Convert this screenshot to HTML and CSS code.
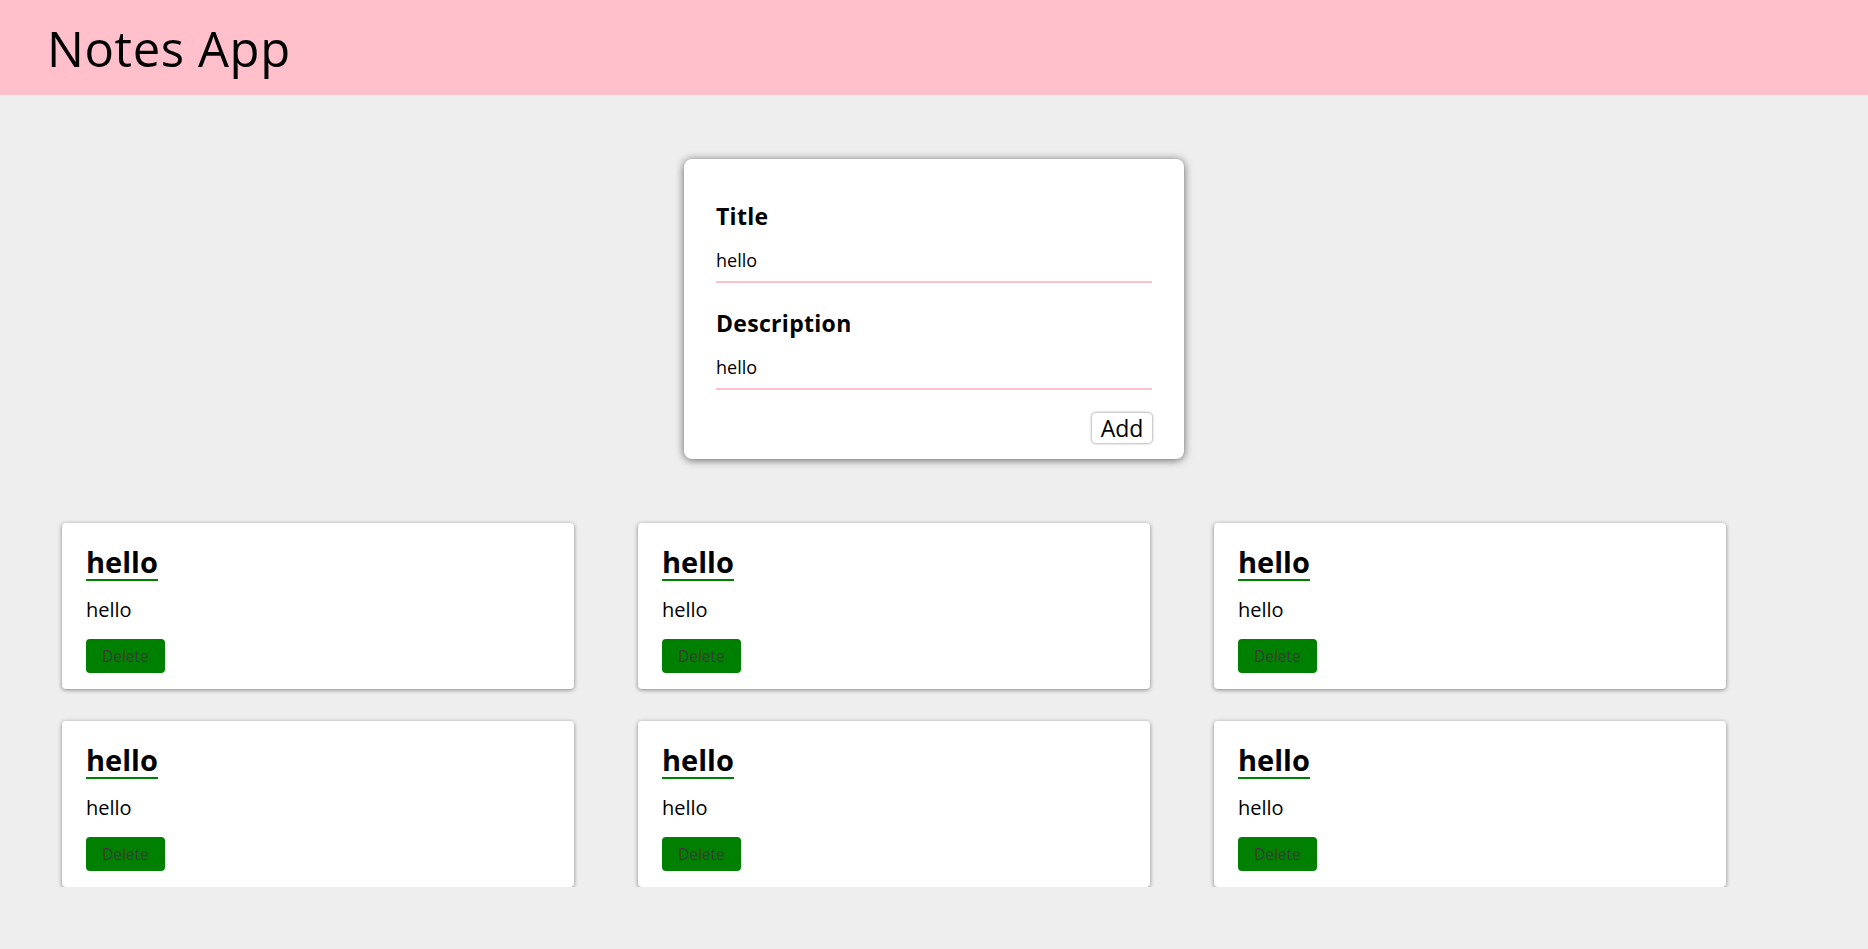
FILE: index.html
```html
<!DOCTYPE html>
<html lang="en">
<head>
<meta charset="utf-8">
<title>Notes App</title>
<link rel="stylesheet" href="styles.css">
</head>
<body>
<header class="app-header">
  <h1 class="app-title">Notes App</h1>
</header>
<main class="main">
  <div class="form-wrap">
    <form class="note-form">
      <div class="field">
        <label class="field-label" for="title">Title</label>
        <input class="field-input" id="title" type="text" value="hello">
      </div>
      <div class="field">
        <label class="field-label" for="desc">Description</label>
        <input class="field-input" id="desc" type="text" value="hello">
      </div>
      <div class="form-actions">
        <button class="add-btn" type="button">Add</button>
      </div>
    </form>
  </div>
  <section class="notes">
    <article class="note"><h2 class="note-title">hello</h2><p class="note-desc">hello</p><button class="delete-btn" type="button">Delete</button></article>
    <article class="note"><h2 class="note-title">hello</h2><p class="note-desc">hello</p><button class="delete-btn" type="button">Delete</button></article>
    <article class="note"><h2 class="note-title">hello</h2><p class="note-desc">hello</p><button class="delete-btn" type="button">Delete</button></article>
    <article class="note"><h2 class="note-title">hello</h2><p class="note-desc">hello</p><button class="delete-btn" type="button">Delete</button></article>
    <article class="note"><h2 class="note-title">hello</h2><p class="note-desc">hello</p><button class="delete-btn" type="button">Delete</button></article>
    <article class="note"><h2 class="note-title">hello</h2><p class="note-desc">hello</p><button class="delete-btn" type="button">Delete</button></article>
  </section>
</main>
</body>
</html>
```

FILE: styles.css
```css
* { box-sizing: border-box; }

html, body {
  margin: 0;
  padding: 0;
  background: #eeeeee;
  font-family: "Open Sans", "Noto Sans", sans-serif;
  color: #000;
}

.app-header {
  background: #ffc0cb;
  height: 95px;
  padding: 16px 0 0 47px;
}

.app-title {
  margin: 0;
  font-size: 49px;
  line-height: 64px;
  font-weight: 400;
  letter-spacing: 0.6px;
}

.main {
  padding-top: 64px;
}

.form-wrap {
  display: flex;
  justify-content: center;
}

.note-form {
  width: 500px;
  background: #fff;
  border-radius: 8px;
  box-shadow: 0 1px 8px rgba(0, 0, 0, 0.6);
  padding: 41px 32px 16px;
}

.field + .field {
  margin-top: 24px;
}

.field-label {
  display: block;
  font-size: 23px;
  line-height: 32px;
  font-weight: 700;
  letter-spacing: 0.3px;
}

.field-input {
  display: block;
  width: 100%;
  margin-top: 8px;
  padding: 8px 0 9px;
  border: none;
  border-bottom: 2px solid #ffc0cb;
  outline: none;
  background: transparent;
  font-family: inherit;
  font-size: 18px;
  line-height: 24px;
  color: #000;
}

.form-actions {
  display: flex;
  justify-content: flex-end;
  margin-top: 23px;
}

.add-btn {
  width: 60px;
  height: 30px;
  padding: 0;
  border: none;
  border-radius: 4px;
  background: #fff;
  box-shadow: 0 0 3px rgba(0, 0, 0, 0.55);
  font-family: inherit;
  font-size: 23px;
  line-height: 30px;
  color: #000;
}

.notes {
  display: grid;
  grid-template-columns: repeat(3, 512px);
  column-gap: 64px;
  row-gap: 32px;
  padding: 64px 0 0 62px;
}

.note {
  background: #fff;
  border-radius: 4px;
  box-shadow: 0 1px 4px rgba(0, 0, 0, 0.45);
  padding: 23px 24px 16px;
  height: 166px;
}

.note-title {
  display: inline-block;
  margin: 0;
  font-size: 29px;
  line-height: 32px;
  font-weight: 700;
  padding-bottom: 1px;
  border-bottom: 2px solid #008000;
}

.note-desc {
  margin: 15px 0 0;
  font-size: 20px;
  line-height: 28px;
}

.delete-btn {
  display: block;
  margin-top: 15px;
  height: 34px;
  padding: 0 16px;
  border: none;
  border-radius: 4px;
  background: #008000;
  color: #3b3b3b;
  font-family: inherit;
  font-size: 15.5px;
  line-height: 34px;
}
```
